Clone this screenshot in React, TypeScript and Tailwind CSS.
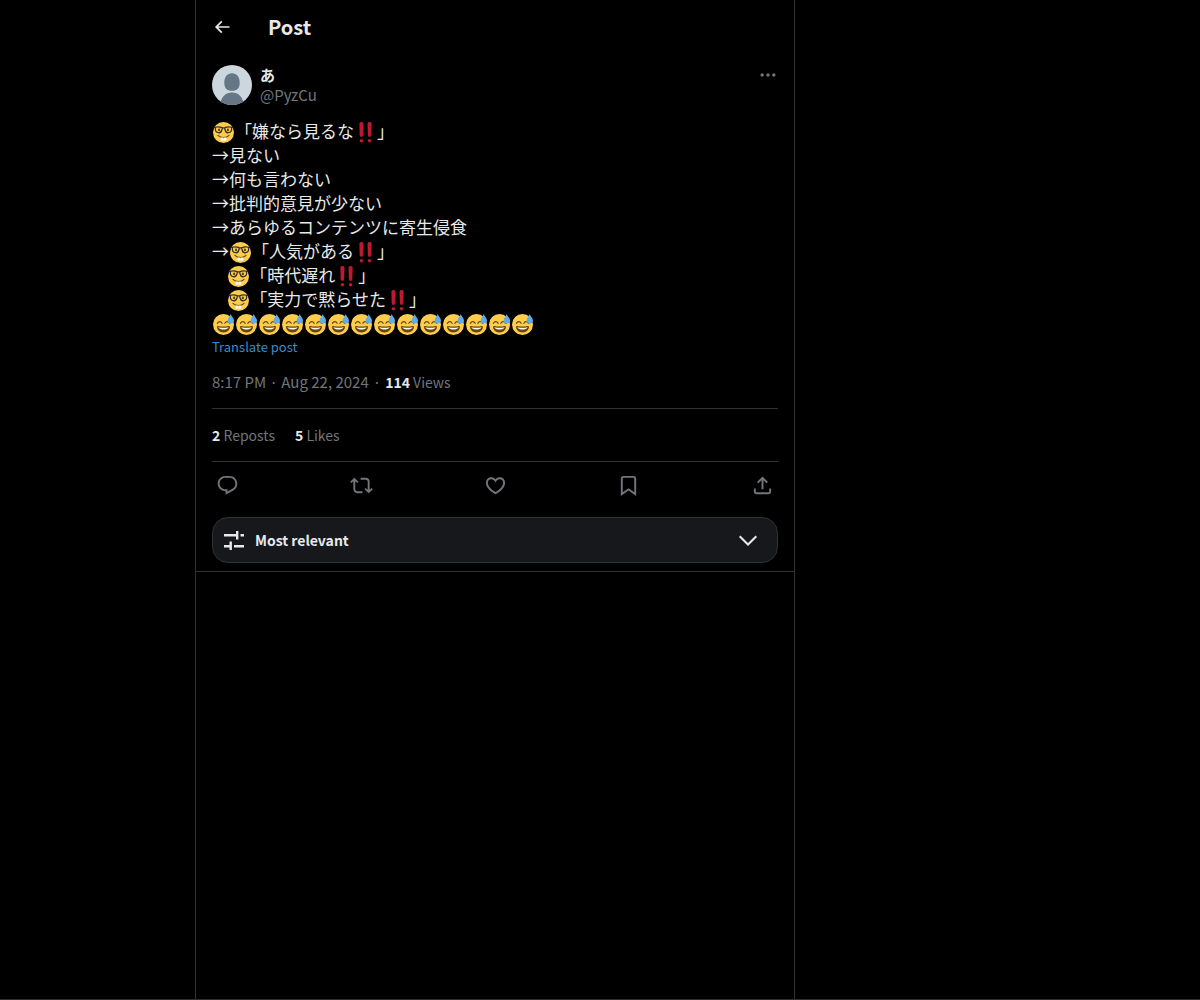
import type { ReactNode } from "react";

const BACK_PATH =
  "M7.414 13l5.043 5.04-1.414 1.42L3.586 12l7.457-7.46 1.414 1.42L7.414 11H21v2H7.414z";
const MORE_PATH =
  "M3 12c0-1.1.9-2 2-2s2 .9 2 2-.9 2-2 2-2-.9-2-2zm9 2c1.1 0 2-.9 2-2s-.9-2-2-2-2 .9-2 2 .9 2 2 2zm7 0c1.1 0 2-.9 2-2s-.9-2-2-2-2 .9-2 2 .9 2 2 2z";

const ACTIONS = [
  {
    label: "Reply",
    path: "M1.751 10c0-4.42 3.584-8 8.005-8h4.366c4.49 0 8.129 3.64 8.129 8.13 0 2.96-1.607 5.68-4.196 7.11l-8.054 4.46v-3.69h-.067c-4.49.1-8.183-3.51-8.183-8.01zm8.005-6c-3.317 0-6.005 2.69-6.005 6 0 3.37 2.77 6.08 6.138 6.01l.351-.01h1.761v2.3l5.087-2.81c1.951-1.08 3.163-3.13 3.163-5.36 0-3.39-2.744-6.13-6.129-6.13H9.756z",
  },
  {
    label: "Repost",
    path: "M4.5 3.88l4.432 4.14-1.364 1.46L5.5 7.55V16c0 1.1.896 2 2 2H13v2H7.5c-2.209 0-4-1.79-4-4V7.55L1.432 9.48.068 8.02 4.5 3.88zM16.5 6H11V4h5.5c2.209 0 4 1.79 4 4v8.45l2.068-1.93 1.364 1.46-4.432 4.14-4.432-4.14 1.364-1.46 2.068 1.93V8c0-1.1-.896-2-2-2z",
  },
  {
    label: "Like",
    path: "M16.697 5.5c-1.222-.06-2.679.51-3.89 2.16l-.805 1.09-.806-1.09C9.984 6.01 8.526 5.44 7.304 5.5c-1.243.07-2.349.78-2.91 1.91-.552 1.12-.633 2.78.479 4.82 1.074 1.97 3.257 4.27 7.129 6.61 3.87-2.34 6.052-4.64 7.126-6.61 1.111-2.04 1.03-3.7.477-4.82-.561-1.13-1.666-1.84-2.908-1.91zm4.187 7.69c-1.351 2.48-4.001 5.12-8.379 7.67l-.503.3-.504-.3c-4.379-2.55-7.029-5.19-8.382-7.67-1.36-2.5-1.41-4.86-.514-6.67.887-1.79 2.647-2.91 4.601-3.01 1.651-.09 3.368.56 4.798 2.01 1.429-1.45 3.146-2.1 4.796-2.01 1.954.1 3.714 1.22 4.601 3.01.896 1.81.846 4.17-.514 6.67z",
  },
  {
    label: "Bookmark",
    path: "M4 4.5C4 3.12 5.119 2 6.5 2h11C18.881 2 20 3.12 20 4.5v18.44l-8-5.71-8 5.71V4.5zM6.5 4c-.276 0-.5.22-.5.5v14.56l6-4.29 6 4.29V4.5c0-.28-.224-.5-.5-.5h-11z",
  },
  {
    label: "Share post",
    path: "M12 2.59l5.7 5.7-1.41 1.42L13 6.41V16h-2V6.41l-3.3 3.3-1.41-1.42L12 2.59zM21 15l-.02 3.51c0 1.38-1.12 2.49-2.5 2.49H5.5C4.11 21 3 19.88 3 18.5V15h2v3.5c0 .28.22.5.5.5h12.98c.28 0 .5-.22.5-.5L19 15h2z",
  },
];

function Icon({ path, className }: { path: string; className: string }) {
  return (
    <svg viewBox="0 0 24 24" fill="currentColor" aria-hidden="true" className={className}>
      <path d={path} />
    </svg>
  );
}

function Emoji({ label, children }: { label: string; children: ReactNode }) {
  return (
    <svg
      viewBox="0 0 36 36"
      role="img"
      aria-label={label}
      className="inline-block size-[21px] mx-px align-[-5px]">
      {children}
    </svg>
  );
}

function Nerd() {
  return (
    <Emoji label="🤓">
      <circle cx="18" cy="18" r="18" fill="#ffcc4d" />
      <ellipse cx="10.5" cy="13.5" rx="2" ry="2.5" fill="#664500" />
      <ellipse cx="25.5" cy="13.5" rx="2" ry="2.5" fill="#664500" />
      <path
        fill="none"
        stroke="#292f33"
        strokeWidth="2.2"
        d="M1 9h3c4-1 8-1 11.500.5 1.500.6 3.500.6 5 0C24 8 28 8 32 9h3M4 9c0 6 .5 9.500 6 9.500 4.500 0 5.500-3.500 6-8.500M32 9c0 6-.5 9.500-6 9.500-4.500 0-5.500-3.500-6-8.500"
      />
      <path
        fill="none"
        stroke="#664500"
        strokeWidth="2"
        strokeLinecap="round"
        d="M8.500 23c2.500 2.800 6 3.800 9.500 3.800s7-1 9.500-3.800"
      />
      <path fill="#fff" d="M13 26.500h4.700V32H14c-.6 0-1-.4-1-1zM18.300 26.500H23V31c0 .6-.4 1-1 1h-3.700z" />
    </Emoji>
  );
}

function Sweat() {
  return (
    <Emoji label="😅">
      <circle cx="18" cy="18" r="18" fill="#ffcc4d" />
      <path
        fill="none"
        stroke="#664500"
        strokeWidth="2"
        strokeLinecap="round"
        d="M7.500 16c1.200-2 2.600-3 4.200-3s2.900 1 4 3M20.300 16c1.100-2 2.400-3 4-3s3 1 4.200 3"
      />
      <path
        fill="#664500"
        d="M18 21.500c-3.600 0-6-.4-9-1-.7-.1-2 0-2 2 0 4 4.600 9 11 9s11-5 11-9c0-2-1.300-2.100-2-2-3 .6-5.400 1-9 1z"
      />
      <path fill="#fff" d="M9 22.500s3 1 9 1 9-1 9-1-2 4-9 4-9-4-9-4z" />
      <path
        fill="#5dadec"
        d="M30.500 0c-1 3.500-5.500 7-5.500 11.500 0 3 2.300 5 5.300 5 3.200 0 5.700-2.300 5.700-5.300C36 7 31.500 4 30.500 0z"
      />
    </Emoji>
  );
}

function Bangs() {
  return (
    <Emoji label="‼️">
      <g fill="#be1931">
        <path d="M7.500 3C7.500 1.300 9 0 11 0s3.500 1.300 3.500 3L14 22c-.1 2-1.300 3.500-3 3.500S8.100 24 8 22z" />
        <circle cx="11" cy="32" r="3" />
        <path d="M21.500 3c0-1.700 1.500-3 3.500-3s3.500 1.300 3.500 3L28 22c-.1 2-1.300 3.500-3 3.500S22.100 24 22 22z" />
        <circle cx="25" cy="32" r="3" />
      </g>
    </Emoji>
  );
}

function Avatar() {
  return (
    <svg viewBox="0 0 40 40" className="size-10 rounded-full" role="img" aria-label="あ">
      <rect width="40" height="40" fill="#ccd6dd" />
      <path
        fill="#657786"
        d="M20 8.300c4.800 0 7.700 3.600 7.700 9.700 0 5-2.400 7.800-7.700 7.800s-7.700-2.800-7.700-7.800c0-6.100 2.900-9.700 7.700-9.700zM8 40c1-8 5.500-12.500 12-12.500S31 32 32 40z"
      />
    </svg>
  );
}

export default function App() {
  return (
    <div className="min-h-screen flex bg-black border-b border-[#2f2f2f] text-[#e7e9ea] text-[15px] leading-5 font-['Noto_Sans_CJK_JP',sans-serif]">
      <main className="ml-[195px] w-full max-w-[600px] border-x border-[#2f3336]">
        <header className="flex items-center gap-7 h-[53px] px-2">
          <button type="button" aria-label="Back" className="p-2">
            <Icon path={BACK_PATH} className="size-5" />
          </button>
          <h1 className="text-xl leading-6 font-bold">Post</h1>
        </header>

        <article className="px-4 pt-3 border-b border-[#2f3336]">
          <div className="flex gap-2">
            <Avatar />
            <div className="grow">
              <p className="font-bold">あ</p>
              <a href="#profile" className="text-[#71767b]">
                @PyzCu
              </a>
            </div>
            <button type="button" aria-label="More" className="self-start text-[#71767b]">
              <Icon path={MORE_PATH} className="size-5" />
            </button>
          </div>

          <div lang="ja" className="mt-3.5 text-[17px] leading-6 whitespace-pre-wrap">
            <p><Nerd />「嫌なら見るな<Bangs />」</p>
            <p>→見ない</p>
            <p>→何も言わない</p>
            <p>→批判的意見が少ない</p>
            <p>→あらゆるコンテンツに寄生侵食</p>
            <p>→<Nerd />「人気がある<Bangs />」</p>
            <p>{"    "}<Nerd />「時代遅れ<Bangs />」</p>
            <p>{"    "}<Nerd />「実力で黙らせた<Bangs />」</p>
            <p>
              {Array.from({ length: 14 }, (_, i) => (
                <Sweat key={i} />
              ))}
            </p>
          </div>
          <button type="button" className="block my-1 text-[13px] leading-4 text-[#3a8ccb]">
            Translate post
          </button>

          <div className="flex gap-1 pt-[13px] pb-4 text-[#71767b] border-b border-[#2f3336]">
            <a href="#post">8:17 PM · Aug 22, 2024</a>
            <span>·</span>
            <span className="text-sm leading-5">
              <b className="text-[#e7e9ea]">114</b> Views
            </span>
          </div>

          <div className="flex gap-5 py-4 text-sm leading-5 text-[#71767b] border-b border-[#2f3336]">
            <a href="#reposts">
              <b className="text-[#e7e9ea]">2</b> Reposts
            </a>
            <a href="#likes">
              <b className="text-[#e7e9ea]">5</b> Likes
            </a>
          </div>

          <div className="flex items-center justify-between h-[47px] px-1 text-[#71767b]">
            {ACTIONS.map((action) => (
              <button key={action.label} type="button" aria-label={action.label}>
                <Icon path={action.path} className="size-[23px]" />
              </button>
            ))}
          </div>

          <button
            type="button"
            className="flex items-center w-full h-[46px] my-2 pl-[11px] pr-5 border border-[#2f3336] rounded-2xl bg-[#16181c] text-sm leading-5 font-bold">
            <svg viewBox="0 0 20 20" fill="currentColor" aria-hidden="true" className="size-5">
              <path d="M0 4h12V1h2.400v8.500H12V6.400H0zM16.500 4H20v2.400h-3.500zM0 15h5.500v-3.500h2.400V20H5.500v-2.600H0zM10 15h10v2.400H10z" />
            </svg>
            <span className="ml-[11px]">Most relevant</span>
            <svg
              viewBox="0 0 18 11"
              fill="none"
              stroke="currentColor"
              strokeWidth="2"
              aria-hidden="true"
              className="ml-auto w-[18px]">
              <path d="M.7 1.200L9 9.500l8.300-8.300" />
            </svg>
          </button>
        </article>
      </main>
    </div>
  );
}
